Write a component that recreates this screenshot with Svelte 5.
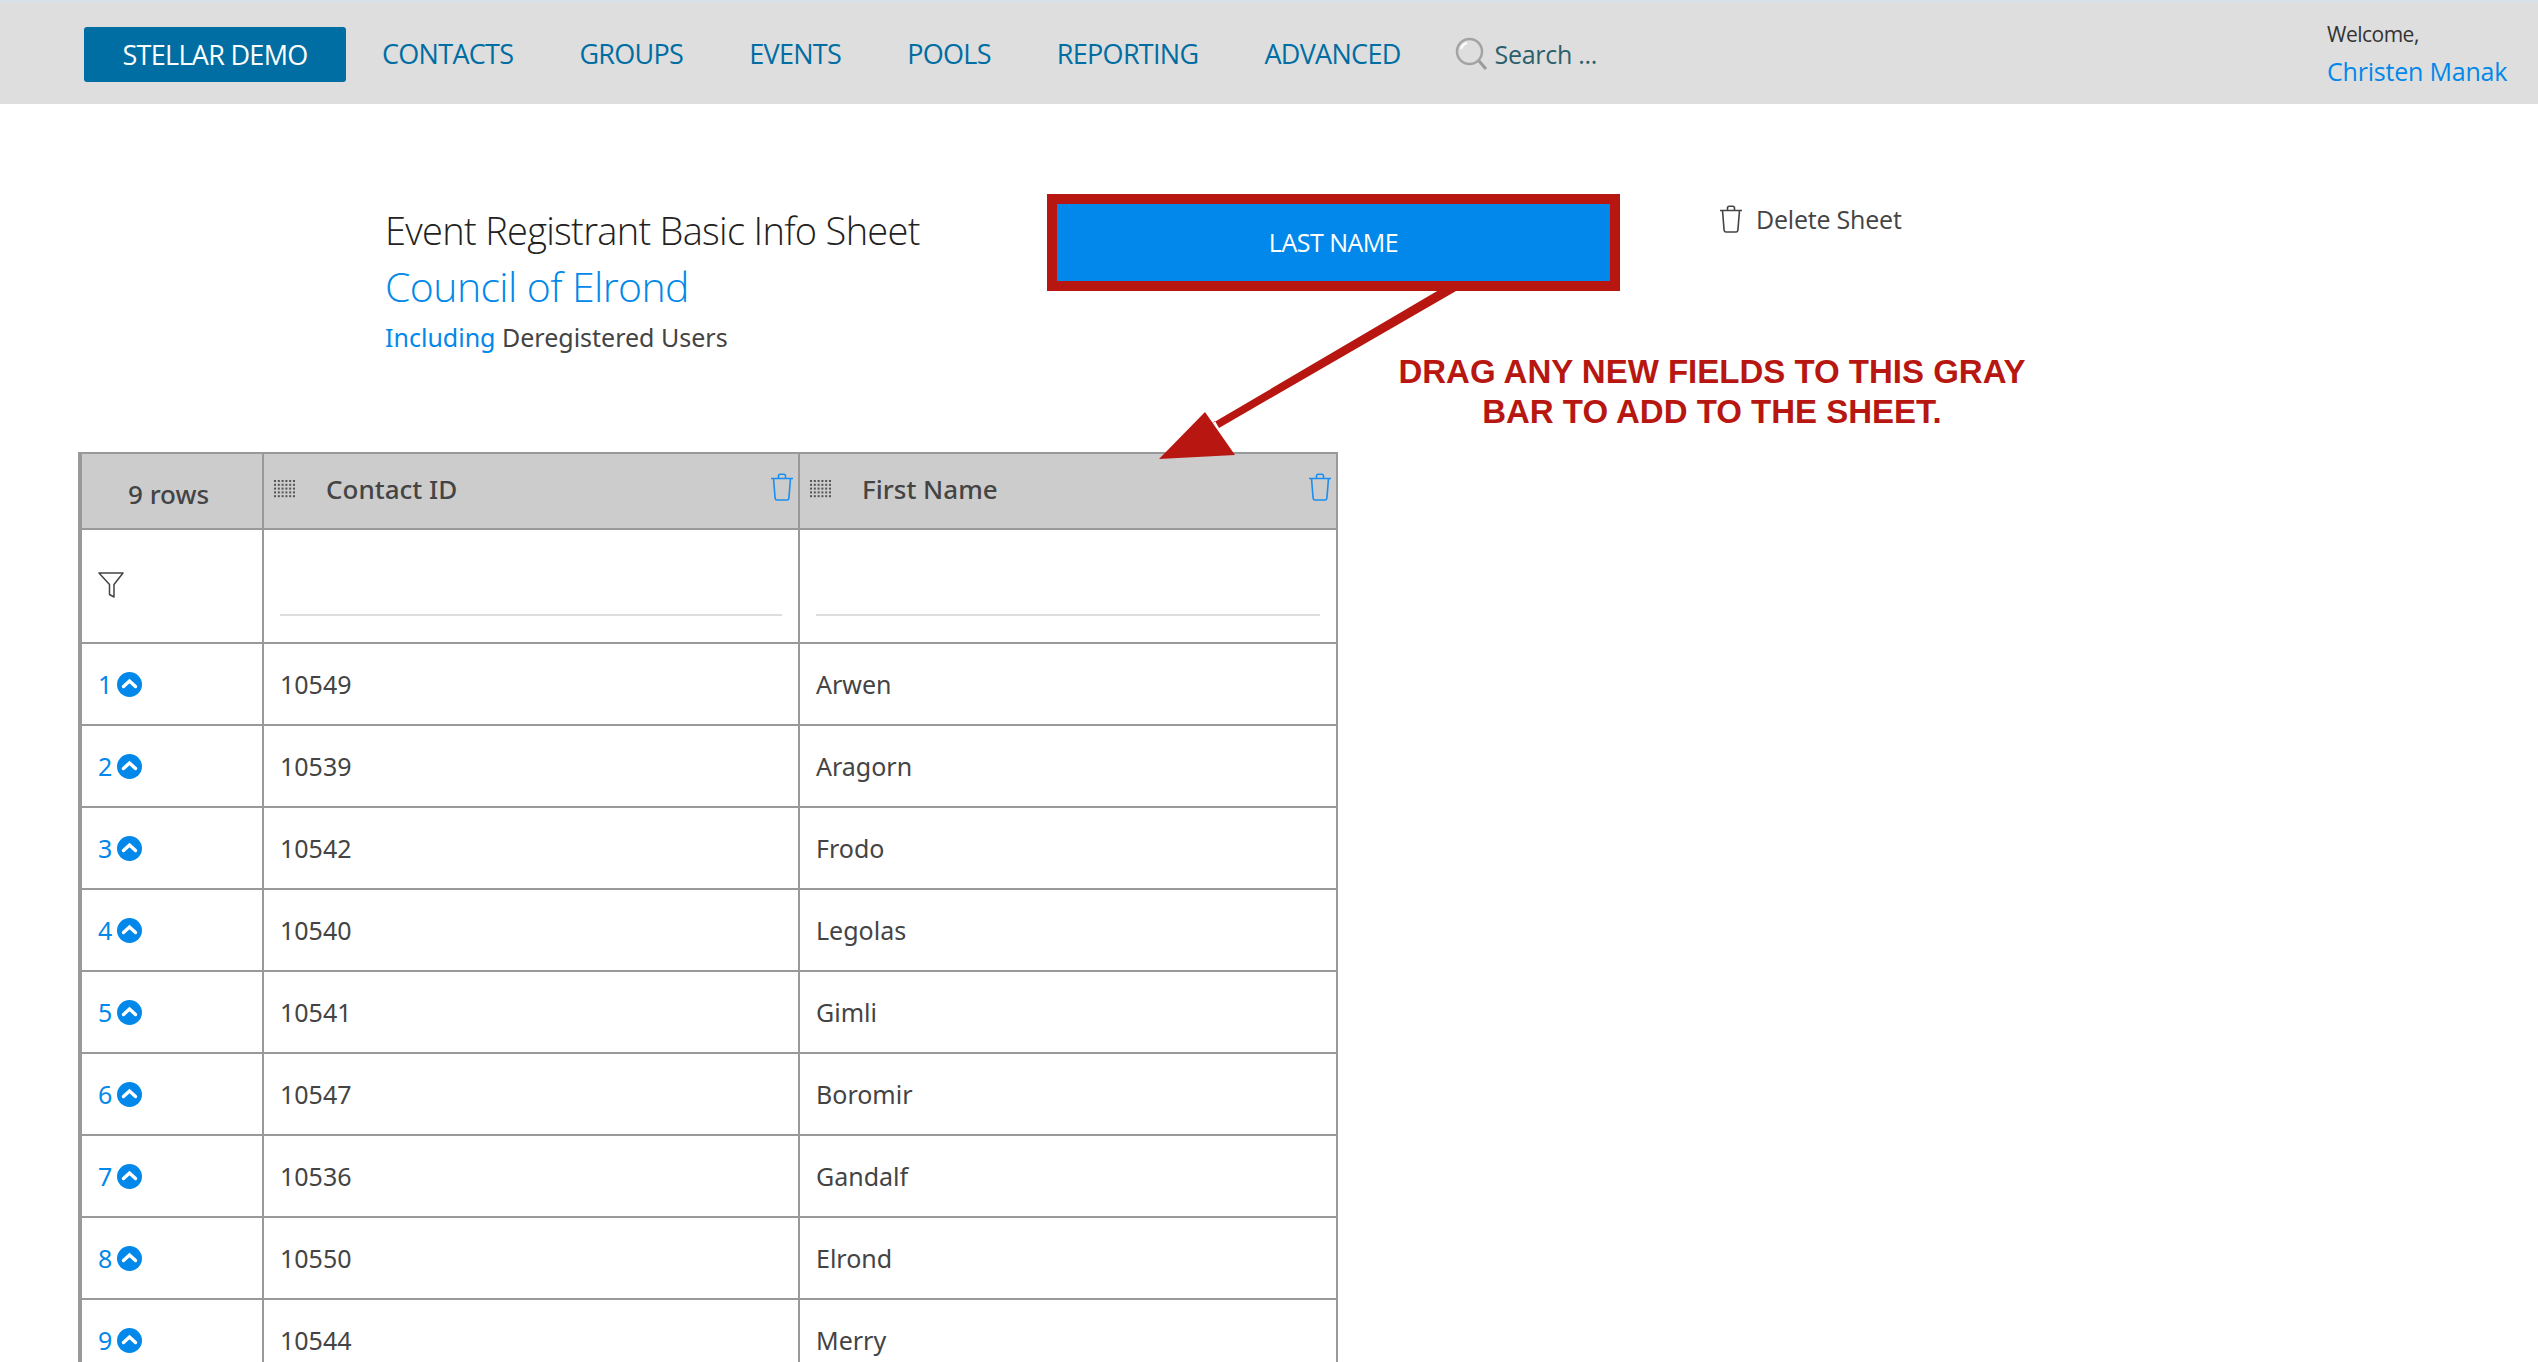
<script lang="ts">
    const nav_items = ["CONTACTS", "GROUPS", "EVENTS", "POOLS", "REPORTING", "ADVANCED"];
    const rows = [
        { id: 10549, name: "Arwen" },
        { id: 10539, name: "Aragorn" },
        { id: 10542, name: "Frodo" },
        { id: 10540, name: "Legolas" },
        { id: 10541, name: "Gimli" },
        { id: 10547, name: "Boromir" },
        { id: 10536, name: "Gandalf" },
        { id: 10550, name: "Elrond" },
        { id: 10544, name: "Merry" }
    ];
    const columns = ["Contact ID", "First Name"];
    const grip_x = [0, 1, 2, 3, 4, 5];
    const grip_y = [0, 1, 2, 3, 4];
</script>

{#snippet trash()}
    <svg class="trash" viewBox="0 0 24 28" fill="none" stroke="currentColor" stroke-width="1.6">
        <path d="M1 5.5h22M3.5 5.5l1.6 19.6q.2 1.9 2 1.9h9.8q1.8 0 2-1.9l1.6-19.6M8.5 5.5V3q0-1.8 1.8-1.8h3.4q1.8 0 1.8 1.8v2.5" />
    </svg>
{/snippet}

<header class="nav">
    <a class="brand" href="#top">STELLAR DEMO</a>
    <ul class="links">
        {#each nav_items as item}
            <li>{item}</li>
        {/each}
    </ul>
    <div class="search">
        <svg viewBox="0 0 34 34" width="34" height="34" fill="none">
            <circle cx="14.5" cy="14.5" r="12.5" stroke="#a3a3a3" stroke-width="2.5" />
            <path d="M6 12a9 9 0 0 1 6-6" stroke="#fff" stroke-width="2" />
            <path d="M24 24l7 8" stroke="#9a9a9a" stroke-width="3" />
        </svg>
        <span>Search ...</span>
    </div>
    <div class="user">
        <span class="welcome">Welcome,</span>
        <span class="name">Christen Manak</span>
    </div>
</header>

<main>
    <section class="heading">
        <h1>Event Registrant Basic Info Sheet</h1>
        <h2>Council of Elrond</h2>
        <p><span class="blue">Including</span> Deregistered Users</p>
    </section>

    <table>
        <thead>
            <tr>
                <th class="count">9 rows</th>
                {#each columns as column}
                    <th>
                        <div class="column">
                            <svg class="grip" viewBox="0 0 22 18" width="22" height="18">
                                {#each grip_y as y}
                                    {#each grip_x as x}
                                        <rect x={x * 3.8} y={y * 3.8} width="2" height="2" fill="#555" />
                                    {/each}
                                {/each}
                            </svg>
                            <span>{column}</span>
                            <span class="column-trash">{@render trash()}</span>
                        </div>
                    </th>
                {/each}
            </tr>
        </thead>
        <tbody>
            <tr class="filters">
                <td>
                    <svg class="funnel" viewBox="0 0 26 26" width="26" height="26" fill="none" stroke="#444" stroke-width="1.5" stroke-linejoin="round">
                        <path d="M1 1h24L16 12.5V25l-4.5-2.5v-10z" />
                    </svg>
                </td>
                <td><div class="filter-line"></div></td>
                <td><div class="filter-line"></div></td>
            </tr>
            {#each rows as row, i}
                <tr>
                    <td>
                        <div class="index">
                            <span>{i + 1}</span>
                            <svg viewBox="0 0 25 25" width="25" height="25">
                                <circle cx="12.5" cy="12.5" r="12.5" fill="#0288ea" />
                                <path d="M6.5 14.5l6-5.5 6 5.5" fill="none" stroke="#fff" stroke-width="3.4" stroke-linecap="round" />
                            </svg>
                        </div>
                    </td>
                    <td>{row.id}</td>
                    <td>{row.name}</td>
                </tr>
            {/each}
        </tbody>
    </table>

    <!-- dragged field and instructions sit over the page -->
    <div class="dragged">LAST NAME</div>
    <svg class="arrow" viewBox="0 0 320 180" width="320" height="180">
        <polygon points="285,0 304,0 60,141 56,134 52,137" fill="#b71710" />
        <polygon points="0,172 46,125 76,168" fill="#b71710" />
    </svg>
    <div class="delete">
        <span class="delete-icon">{@render trash()}</span>
        <span>Delete Sheet</span>
    </div>
    <p class="hint">DRAG ANY NEW FIELDS TO THIS GRAY<br />BAR TO ADD TO THE SHEET.</p>
</main>

<style>
    :global(body) {
        margin: 0;
        height: 1362px;
        overflow: hidden;
        background: white;
        font-family: "Noto Sans", sans-serif;
        color: #444;
    }

    .nav {
        display: flex;
        align-items: center;
        box-sizing: border-box;
        height: 104px;
        padding: 0 30px 0 84px;
        background: #dedede;
        border-top: 3px solid #d8e0e8;
        font-family: "Open Sans", sans-serif;
    }

    .brand {
        width: 262px;
        height: 55px;
        margin-top: 1px;
        border-radius: 3px;
        background: #006da3;
        color: white;
        text-align: center;
        line-height: 55px;
        font-size: 27px;
        letter-spacing: -0.7px;
        text-decoration: none;
    }

    .links {
        display: flex;
        gap: 66px;
        margin: 0 0 0 36px;
        padding: 0;
        list-style: none;
        font-size: 27px;
        letter-spacing: -0.7px;
        color: #006da3;
    }

    .search {
        display: flex;
        align-items: center;
        gap: 6px;
        margin-left: 54px;
        font-size: 25px;
        letter-spacing: -0.3px;
        color: #2b5f6b;
    }

    .user {
        display: flex;
        flex-direction: column;
        margin-left: auto;
        width: 181px;
    }

    .welcome {
        font-size: 21px;
        letter-spacing: -0.5px;
        color: #333;
    }

    .name {
        margin-top: 6px;
        font-size: 25px;
        letter-spacing: -0.2px;
        color: #0288ea;
    }

    main {
        position: relative;
    }

    .heading {
        height: 348px;
        box-sizing: border-box;
        padding: 97px 0 0 385px;
    }

    h1 {
        margin: 0;
        font-family: "Open Sans", sans-serif;
        font-size: 38px;
        font-weight: 300;
        line-height: 58px;
        letter-spacing: -0.7px;
        color: #222;
    }

    h2 {
        margin: 0;
        font-family: "Open Sans", sans-serif;
        font-size: 41px;
        font-weight: 300;
        line-height: 54px;
        letter-spacing: -0.6px;
        color: #0288ea;
    }

    .heading p {
        margin: 6px 0 0;
        font-size: 25px;
        line-height: 36px;
    }

    .blue {
        color: #0288ea;
    }

    table {
        margin-left: 78px;
        width: 1260px;
        table-layout: fixed;
        border-spacing: 0;
        border-top: 2px solid #999;
        border-left: 4px solid #999;
        font-size: 25px;
    }

    th, td {
        box-sizing: border-box;
        padding: 0;
        border-right: 2px solid #999;
        border-bottom: 2px solid #999;
        text-align: left;
    }

    th {
        height: 76px;
        background: #ccc;
        font-size: 26px;
        font-weight: 500;
    }

    th:first-child, td:first-child {
        width: 182px;
    }

    th:nth-child(2), td:nth-child(2) {
        width: 536px;
    }

    .count {
        padding: 6px 0 0 46px;
    }

    .column {
        position: relative;
        display: flex;
        align-items: center;
        gap: 30px;
        padding: 0 0 4px 10px;
    }

    .column-trash {
        position: absolute;
        right: 4px;
        top: 2px;
        color: #1b8ef0;
    }

    .trash {
        display: block;
        width: 24px;
        height: 28px;
    }

    tbody td {
        height: 82px;
        padding-left: 16px;
    }

    .filters td {
        position: relative;
        height: 114px;
    }

    .funnel {
        display: block;
        margin-top: -2px;
    }

    .filter-line {
        margin: 57px 16px 0 0;
        height: 2px;
        background: #ddd;
    }

    .index {
        display: flex;
        align-items: center;
        gap: 5px;
        color: #0288ea;
    }

    .dragged {
        position: absolute;
        left: 1047px;
        top: 90px;
        box-sizing: border-box;
        width: 573px;
        height: 97px;
        border: 10px solid #b71710;
        background: #0288ea;
        color: white;
        font-family: "Open Sans", sans-serif;
        font-size: 25px;
        letter-spacing: -0.5px;
        text-align: center;
        line-height: 77px;
    }

    .arrow {
        position: absolute;
        left: 1159px;
        top: 183px;
    }

    .delete {
        position: absolute;
        left: 1719px;
        top: 98px;
        display: flex;
        align-items: center;
        gap: 13px;
        font-family: "Open Sans", sans-serif;
        font-size: 25px;
        letter-spacing: -0.2px;
    }

    .delete-icon {
        color: #444;
    }

    .hint {
        position: absolute;
        left: 1302px;
        top: 248px;
        width: 820px;
        margin: 0;
        font-family: "Liberation Sans", sans-serif;
        font-size: 33px;
        font-weight: 700;
        line-height: 40px;
        text-align: center;
        color: #b71710;
    }
</style>
